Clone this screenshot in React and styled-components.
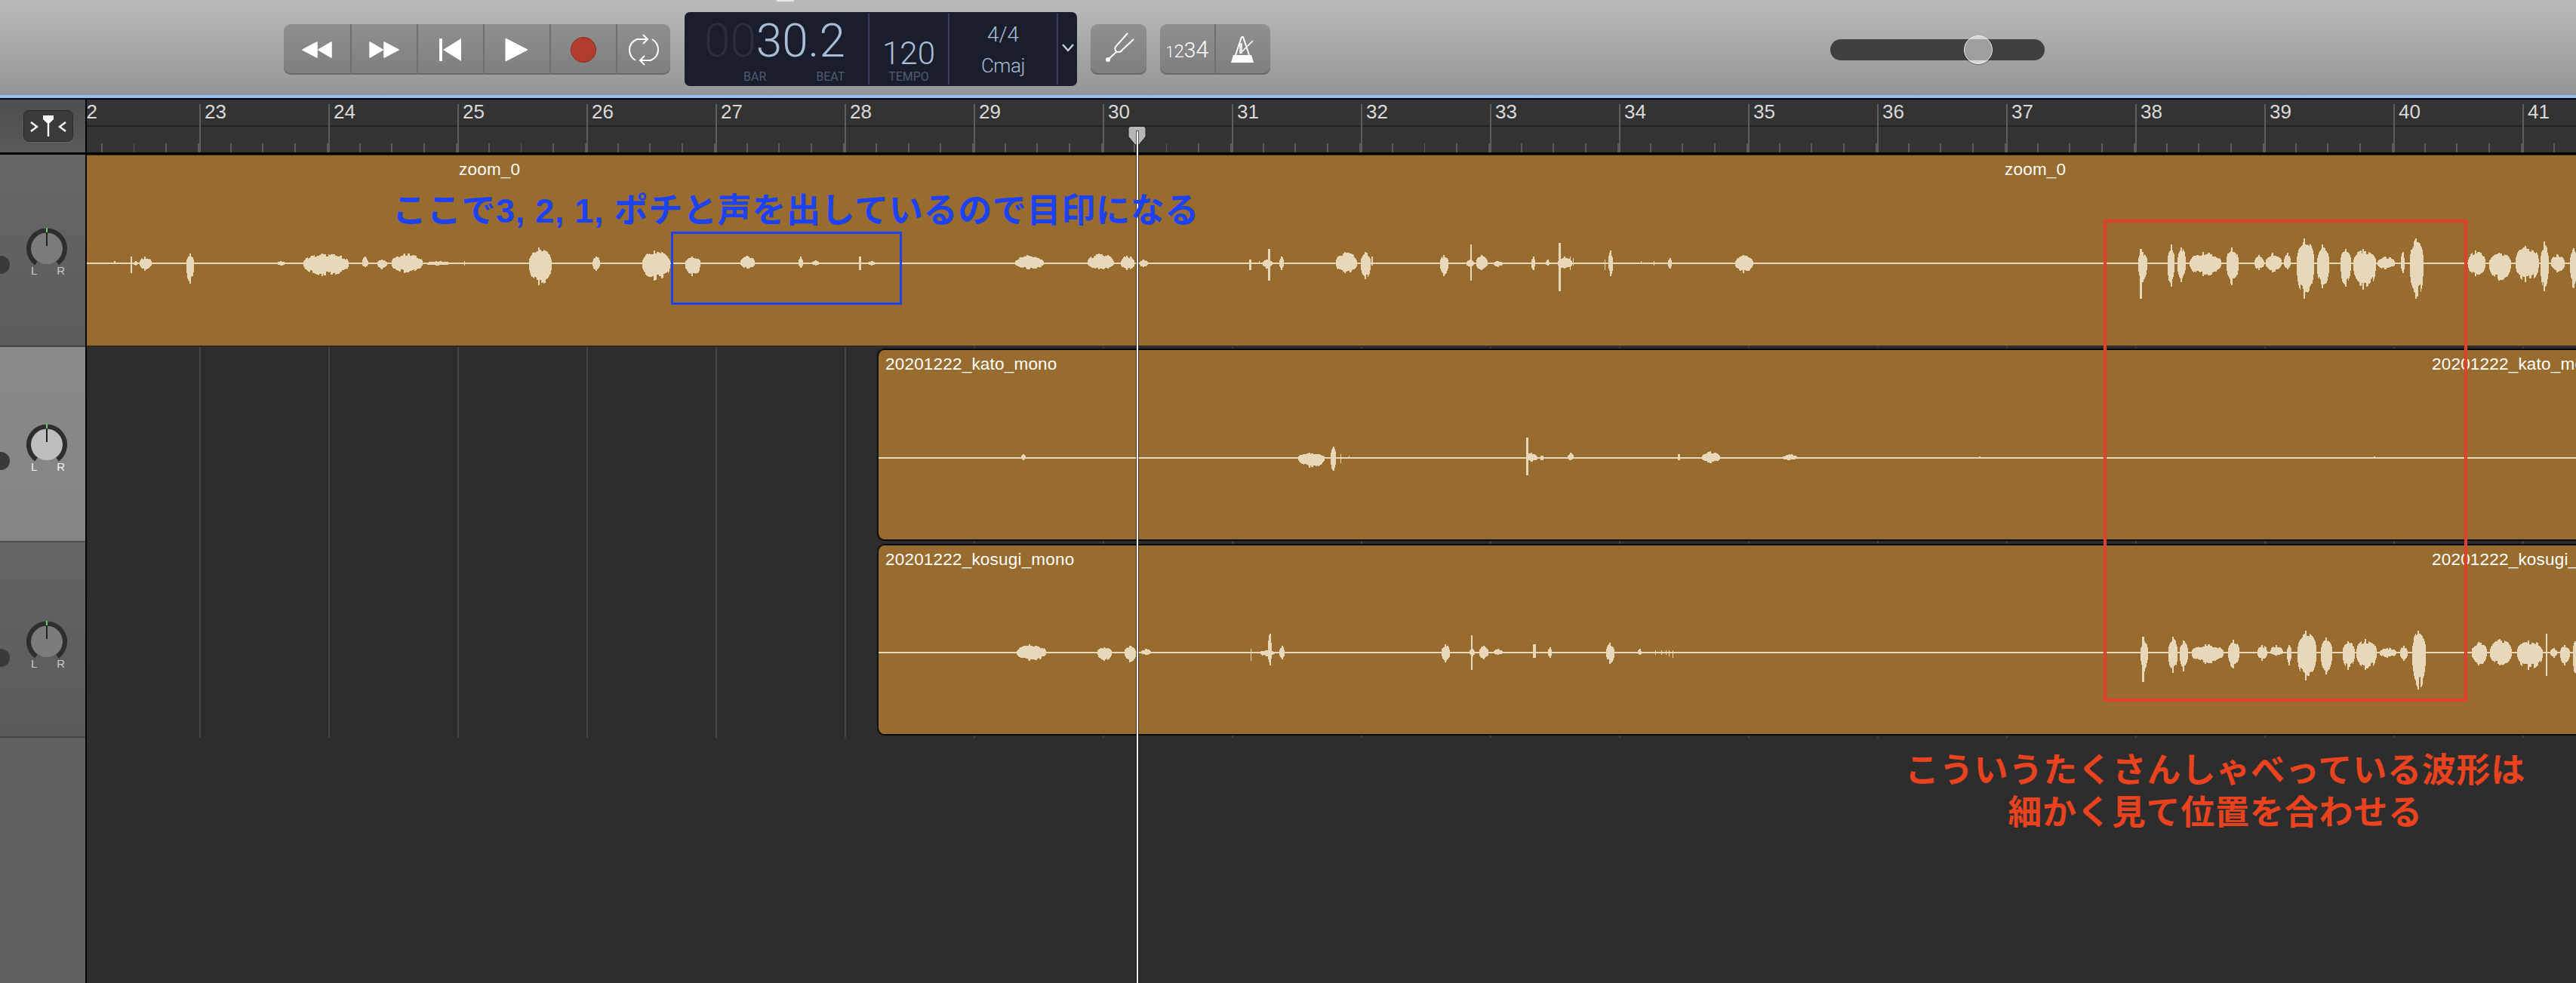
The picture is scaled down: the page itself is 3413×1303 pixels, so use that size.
import React from "react";
import styled, { createGlobalStyle } from "styled-components";

const BAR_WIDTH = 171;
const UI_FONT = '"Liberation Sans", Arial, sans-serif';
const NUM_FONT = 'Roboto, "Liberation Sans", sans-serif';
const JP_FONT = '"Liberation Sans", "Noto Sans CJK JP", sans-serif';

const GlobalStyle = createGlobalStyle`
    html, body { margin: 0; padding: 0; background: #2d2d2d; }
    body { font-family: ${UI_FONT}; overflow: hidden; }
`;

// [from x, to x, up, down] in page pixels
const wave1 = [
    [151, 153, 3, 1], [173, 175, 9, 13], [177, 183, 3, 3], [185, 201, 9, 10], [247, 257, 13, 27],
    [367, 378, 3, 3], [402, 462, 13, 17], [480, 488, 9, 5], [500, 513, 5, 8], [519, 560, 13, 13],
    [564, 596, 3, 3], [615, 616, 3, 3], [701, 731, 21, 29], [785, 795, 9, 10], [851, 888, 17, 23],
    [908, 928, 9, 17], [981, 1000, 10, 7], [1058, 1064, 9, 6], [1076, 1085, 4, 3], [1138, 1141, 9, 9],
    [1150, 1160, 3, 3], [1345, 1383, 11, 8], [1441, 1476, 13, 8], [1485, 1503, 10, 9], [1510, 1521, 5, 5],
    [1655, 1658, 5, 9], [1668, 1669, 3, 0], [1673, 1686, 5, 7], [1680, 1683, 19, 23], [1695, 1701, 9, 9],
    [1770, 1798, 15, 13], [1803, 1816, 15, 21], [1817, 1819, 9, 3], [1908, 1919, 11, 17], [1948, 1950, 25, 23],
    [1943, 1953, 5, 5], [1956, 1971, 11, 9], [1979, 1991, 3, 5], [2029, 2034, 9, 9], [2048, 2053, 5, 3],
    [2065, 2068, 27, 37], [2064, 2083, 9, 7], [2080, 2081, 9, 9], [2084, 2085, 7, 3], [2126, 2127, 5, 9],
    [2131, 2137, 17, 17], [2174, 2175, 3, 0], [2191, 2192, 3, 3], [2210, 2215, 7, 7], [2299, 2323, 11, 13],
    [2835, 2838, 19, 47], [2833, 2845, 15, 25], [2872, 2881, 25, 31], [2885, 2896, 21, 25], [2901, 2943, 15, 17],
    [2950, 2966, 21, 29], [2987, 3000, 11, 9], [3002, 3023, 14, 12], [3026, 3035, 14, 8], [3043, 3066, 33, 47],
    [3070, 3086, 25, 33], [3101, 3115, 19, 31], [3118, 3148, 19, 35], [3150, 3173, 9, 8], [3181, 3186, 15, 13],
    [3193, 3211, 33, 47], [3270, 3293, 17, 17], [3298, 3327, 14, 23], [3333, 3364, 23, 25], [3366, 3377, 29, 37],
    [3380, 3398, 12, 12], [3405, 3414, 20, 33],
];

const wave2 = [
    [1353, 1359, 5, 3], [1720, 1755, 7, 13], [1763, 1770, 15, 17], [1776, 1777, 5, 7], [1787, 1788, 3, 0],
    [2022, 2025, 27, 23], [2022, 2037, 7, 5], [2041, 2045, 3, 3], [2077, 2085, 7, 3], [2223, 2226, 5, 3],
    [2255, 2279, 9, 7], [2362, 2381, 5, 3], [2622, 2624, 2, 1], [3145, 3147, 2, 1],
];

const wave3 = [
    [1347, 1386, 11, 11], [1454, 1473, 7, 11], [1490, 1505, 9, 13], [1512, 1525, 5, 3], [1657, 1658, 5, 11],
    [1669, 1689, 3, 5], [1680, 1685, 25, 17], [1695, 1702, 9, 9], [1910, 1921, 11, 13], [1949, 1951, 23, 23],
    [1947, 1954, 5, 5], [1960, 1972, 9, 9], [1979, 1991, 5, 3], [2031, 2035, 11, 7], [2051, 2056, 7, 7],
    [2128, 2139, 13, 15], [2170, 2175, 5, 3], [2193, 2194, 3, 3], [2201, 2202, 3, 3], [2207, 2208, 3, 3],
    [2211, 2212, 3, 5], [2216, 2217, 3, 7],
    [2838, 2841, 21, 39], [2836, 2846, 15, 25], [2873, 2885, 21, 27], [2888, 2899, 16, 25], [2904, 2946, 11, 15],
    [2952, 2967, 17, 21], [2991, 3004, 10, 11], [3008, 3025, 10, 4], [3030, 3036, 10, 17], [3044, 3069, 29, 37],
    [3075, 3090, 20, 29], [3104, 3120, 15, 23], [3122, 3149, 18, 23], [3153, 3175, 6, 7], [3180, 3190, 9, 11],
    [3196, 3214, 29, 49], [3275, 3295, 14, 17], [3299, 3328, 18, 17], [3335, 3369, 16, 23], [3373, 3375, 25, 31],
    [3379, 3388, 6, 7], [3392, 3405, 10, 17], [3409, 3414, 15, 27],
];

const noise = (n) => {
    const v = Math.sin(n * 12.9898) * 43758.5453;
    return v - Math.floor(v);
};

const wavePath = (blips) => {
    let d = "";
    blips.forEach(([from, to, up, down]) => {
        const width = to - from;
        if (width <= 4) {
            d += `M${from} ${-up}h${width}V${down}h${-width}z`;
            return;
        }
        // the tallest column sits a bit left of the middle, the rest falls off jaggedly
        const peak = from + Math.round(width * 0.4);
        for (let x = from; x < to; x++) {
            const t = (x - from + 0.5) / width;
            const env = Math.pow(Math.sin(Math.PI * t), 0.35);
            const isPeak = x === peak || x === peak + 1;
            const step = Math.floor(x / 3);
            const u = isPeak ? up : Math.round(up * env * (0.66 + 0.32 * noise(step)));
            const b = isPeak ? down : Math.round(down * env * (0.66 + 0.32 * noise(step + 7)));
            d += `M${x} ${-u}h1V${b}h-1z`;
        }
    });
    return d;
};

const Page = styled.div`
    position: relative;
    width: 3413px;
    height: 1303px;
    display: flex;
    flex-direction: column;
    overflow: hidden;
    background: #2d2d2d;
`;

/* ---------- toolbar ---------- */
const Toolbar = styled.header`
    flex: 0 0 126px;
    display: flex;
    align-items: flex-start;
    padding-left: 376px;
    background: linear-gradient(#bababa, #959595);
`;
const TopNub = styled.i`
    position: absolute;
    top: 0;
    left: 1029px;
    width: 23px;
    height: 2px;
    background: #e6e6e6;
`;
const ButtonGroup = styled.div`
    display: flex;
    height: 67px;
    margin-top: 32px;
    margin-left: ${(p) => p.$gap || 0}px;
    border-radius: 9px;
    overflow: hidden;
    background: linear-gradient(#909090, #7e7e7e);
    box-shadow: inset 0 -2px 0 #696969;
`;
const ToolButton = styled.div`
    width: ${(p) => p.$width}px;
    box-sizing: border-box;
    display: flex;
    align-items: center;
    justify-content: center;
    color: #fff;
    & + & { border-left: 2px solid #6f6f6f; }
`;
const Display = styled.div`
    width: 520px;
    height: 98px;
    margin: 16px 0 0 19px;
    padding: 2px 0;
    box-sizing: border-box;
    display: flex;
    border-radius: 7px;
    background: #1a1d2b;
    color: #a9bdd6;
    font-family: ${NUM_FONT};
`;
const TimeCell = styled.div`
    width: 243px;
    padding-left: 26px;
    box-sizing: border-box;
    display: flex;
    flex-direction: column;
`;
const TimeDigits = styled.div`
    height: 76px;
    font-size: 62px;
    font-weight: 300;
    line-height: 72px;
    white-space: nowrap;
    span { color: #2a2e3d; }
`;
const TimeLabels = styled.div`
    display: flex;
    gap: 66px;
    padding-left: 52px;
`;
const DisplayLabel = styled.span`
    color: #4f5c72;
    font-size: 16px;
    line-height: 16px;
`;
const TempoCell = styled.div`
    width: 106px;
    border-left: 2px solid #39425a;
    box-sizing: border-box;
    display: flex;
    flex-direction: column;
    align-items: center;
`;
const TempoValue = styled.div`
    height: 76px;
    padding-top: 30px;
    box-sizing: border-box;
    font-size: 42px;
    font-weight: 300;
    line-height: 46px;
`;
const SignatureCell = styled.div`
    width: 144px;
    border-left: 2px solid #39425a;
    box-sizing: border-box;
    display: flex;
    flex-direction: column;
    align-items: center;
    padding-top: 10px;
    gap: 5px;
    font-size: 28px;
    line-height: 36px;
    font-weight: 300;
`;
const KeyName = styled.span`
    font-size: 26px;
    letter-spacing: -0.4px;
`;
const ChevronCell = styled.div`
    flex: 1;
    border-left: 2px solid #39425a;
    display: flex;
    align-items: center;
    justify-content: center;
    padding-bottom: 4px;
`;
const CountIn = styled.div`
    font-family: ${NUM_FONT};
    font-weight: 300;
    display: flex;
    align-items: baseline;
`;
const CountDigit = styled.span`
    font-size: ${(p) => p.$size}px;
`;
const Slider = styled.div`
    width: 284px;
    height: 28px;
    margin: 52px 0 0 742px;
    display: flex;
    align-items: center;
    padding-left: 177px;
    box-sizing: border-box;
    border-radius: 14px;
    background: #3f413e;
`;
const SliderKnob = styled.div`
    width: 38px;
    height: 38px;
    flex: none;
    box-sizing: border-box;
    border-radius: 50%;
    border: 1px solid #f0f0f0;
    background: linear-gradient(#d8d8d8 0 10%, #9d9f9c 10% 90%, #d8d8d8 90%);
    box-shadow: 0 1px 1px rgba(0, 0, 0, 0.4);
`;
const AccentLine = styled.div`
    flex: 0 0 4px;
    background: #8fbcf5;
`;
const AccentEdge = styled.div`
    flex: 0 0 2px;
    background: #000;
`;

/* ---------- ruler ---------- */
const RulerRow = styled.div`
    flex: 0 0 73px;
    box-sizing: border-box;
    display: flex;
    border-bottom: 3px solid #000;
`;
const RulerCorner = styled.div`
    flex: 0 0 113px;
    padding-left: 31px;
    box-sizing: border-box;
    display: flex;
    align-items: center;
    background: linear-gradient(#4e4e4e, #5a5a5a);
`;
const HeadDivider = styled.div`
    flex: 0 0 2px;
    background: #000;
`;
const ZoomButton = styled.div`
    width: 66px;
    height: 42px;
    display: flex;
    align-items: center;
    justify-content: center;
    box-sizing: border-box;
    border-radius: 7px;
    border: 1px solid #2a2a2a;
    background: #3b3b3b;
    box-shadow: 0 1px 0 #6a6a6a;
`;
const RulerBars = styled.div`
    flex: 1;
    display: flex;
    overflow: hidden;
    background: linear-gradient(#333 0 34px, #222 34px 36px, #333 36px);
`;
const Bar = styled.div`
    flex: 0 0 ${BAR_WIDTH}px;
    margin-left: ${(p) => p.$offset || 0}px;
    height: 70px;
    box-sizing: border-box;
    padding-left: 7px;
    background:
        linear-gradient(#5e5e5e, #5e5e5e) 0 6px / 2px 64px no-repeat,
        repeating-linear-gradient(to right, transparent 0 40.75px, #5a5a5a 40.75px 42.75px) 0 100% / 100% 12px no-repeat;
`;
const BarNumber = styled.span`
    display: block;
    color: #d9d9d9;
    font-family: ${UI_FONT};
    font-size: 26px;
    line-height: 30px;
    padding-top: 1px;
`;

/* ---------- tracks ---------- */
const Tracks = styled.main`
    flex: 1;
    display: flex;
    flex-direction: column;
`;
const TrackRow = styled.section`
    flex: ${(p) => (p.$height ? `0 0 ${p.$height}px` : 1)};
    display: flex;
    min-height: 0;
`;
const TrackHeader = styled.div`
    flex: 0 0 113px;
    box-sizing: border-box;
    display: flex;
    align-items: center;
    padding-top: ${(p) => p.$top || 0}px;
    background: ${(p) => p.$bg};
    border-bottom: 2px solid ${(p) => p.$line};
`;
const MuteDot = styled.i`
    flex: none;
    width: 24px;
    height: 24px;
    margin: 35px 0 0 -11px;
    border-radius: 50%;
    background: #3a3a38;
`;
const KnobBox = styled.div`
    width: 54px;
    margin-left: 22px;
    display: flex;
    flex-direction: column;
`;
const KnobEnds = styled.div`
    display: flex;
    justify-content: space-between;
    margin-top: -5px;
    padding: 0 3px 0 6px;
    color: ${(p) => p.$color};
    font-size: 15px;
    line-height: 15px;
`;
const Lane = styled.div`
    flex: 1;
    min-width: 0;
    padding: ${(p) => p.$pad};
    box-sizing: border-box;
    display: flex;
    background-color: #2d2d2d;
    background-image: ${(p) => (p.$grid ? "linear-gradient(to right, #444 2px, transparent 2px)" : "none")};
    background-size: ${BAR_WIDTH}px 100%;
    background-position: 149px 0;
`;
const Region = styled.div`
    position: relative;
    flex: 1;
    margin-left: ${(p) => p.$left}px;
    overflow: hidden;
    background: #986b2f;
    box-sizing: border-box;
    ${(p) => p.$clip && `
        border-radius: 9px 0 0 9px;
        border-left: 2px solid #111;
        box-shadow: inset 0 2px 0 #050505, inset 0 -2px 0 #050505;
    `}
`;
const RegionName = styled.span`
    position: absolute;
    top: ${(p) => p.$top}px;
    left: ${(p) => p.$left}px;
    color: #fff;
    font-size: 22.5px;
    letter-spacing: 0.2px;
    line-height: 26px;
    white-space: nowrap;
`;
const WaveSvg = styled.svg`
    display: block;
    shape-rendering: crispEdges;
`;

/* ---------- overlays ---------- */
const PlayheadLine = styled.div`
    position: absolute;
    top: 174px;
    bottom: 0;
    left: 1506px;
    width: 2px;
    background: #f4f4f4;
    box-shadow: 0 0 0 1px rgba(20, 15, 10, 0.6);
`;
const PlayheadCap = styled.svg`
    position: absolute;
    top: 167px;
    left: 1494px;
`;
const Note = styled.div`
    position: absolute;
    top: ${(p) => p.$top}px;
    left: ${(p) => p.$left}px;
    color: ${(p) => p.$color};
    font-family: ${JP_FONT};
    font-size: ${(p) => p.$size}px;
    font-weight: 700;
    line-height: 56px;
    text-align: center;
    white-space: nowrap;
    letter-spacing: ${(p) => p.$spacing || 0}px;
`;
const MarkBox = styled.div`
    position: absolute;
    top: ${(p) => p.$top}px;
    left: ${(p) => p.$left}px;
    width: ${(p) => p.$w}px;
    height: ${(p) => p.$h}px;
    box-sizing: border-box;
    border: ${(p) => p.$border}px solid ${(p) => p.$color};
`;

const Rewind = ({ flip }) => (
    <svg width="42" height="24" viewBox="0 0 42 24" style={flip ? { transform: "scaleX(-1)" } : undefined}>
        <path fill="#fff" stroke="#fff" strokeWidth="1.5" strokeLinejoin="round" d="M21 2v20L2 12zM40 2v20L23 12z" />
    </svg>
);

const SkipBack = () => (
    <svg width="32" height="32" viewBox="0 0 32 32">
        <path fill="#fff" d="M1 1h4v30H1zM30 1v30L6 16z" />
    </svg>
);

const Play = () => (
    <svg width="32" height="32" viewBox="0 0 32 32">
        <path fill="#fff" stroke="#fff" strokeLinejoin="round" d="M1 1l29 15L1 31z" />
    </svg>
);

const RecordDot = () => (
    <svg width="36" height="36" viewBox="0 0 36 36">
        <circle cx="18" cy="18" r="16.5" fill="#b23c2e" stroke="#8e2c21" />
    </svg>
);

const Cycle = () => (
    <svg width="44" height="44" viewBox="0 0 44 44" fill="none" stroke="#fff" strokeWidth="2">
        <path d="M13 8C6 11 3 16 3 22c0 6 3 11 8 14" />
        <path d="M12 8h14M21 2l6 6-6 6" />
        <path d="M31 36c7-3 10-8 10-14 0-6-3-11-8-14" />
        <path d="M32 36H18M23 30l-6 6 6 6" />
    </svg>
);

const TuningFork = () => (
    <svg width="74" height="67" viewBox="0 0 74 67" fill="none" stroke="#fff" strokeWidth="2">
        <path d="M23 47l11-10" />
        <path d="M49 12L33 30c-2 3 0 7 4 7 2 0 4-1 5-3l15-14" />
        <circle cx="23" cy="47" r="3" fill="#fff" stroke="none" />
    </svg>
);

const Metronome = () => (
    <svg width="34" height="36" viewBox="0 0 34 36" fill="none" stroke="#fff" strokeWidth="2">
        <path d="M15 1h2l8 24M15 1L7 25" />
        <path fill="#fff" stroke="none" d="M4 25h24l3 10H1z" />
        <path d="M13 10v13M13 23L30 6M12 11l3-1v13" strokeWidth="1.6" />
    </svg>
);

const FocusIcon = () => (
    <svg width="50" height="28" viewBox="0 0 50 28" fill="none" stroke="#fff" strokeWidth="2.4">
        <path fill="#fff" stroke="none" d="M18 0h14v5l-5 5h-4l-5-5z" />
        <path d="M25 4v24" />
        <path d="M2 9l8 6-8 6M48 9l-8 6 8 6" />
    </svg>
);

const PanKnob = ({ disc, labelColor }) => (
    <KnobBox>
        <svg width="54" height="54" viewBox="0 0 54 54">
            <circle cx="27" cy="27" r="21" fill={disc} />
            <path d="M13 47A24 24 0 1 1 41 47" fill="none" stroke="#2e2e2e" strokeWidth="6" />
            <path d="M27 0v6" stroke="#6ccf6a" strokeWidth="2" />
            <path d="M27 6v18" stroke="#222" strokeWidth="2" />
        </svg>
        <KnobEnds $color={labelColor}>
            <span>L</span>
            <span>R</span>
        </KnobEnds>
    </KnobBox>
);

const Wave = ({ left, blips, center, height }) => (
    <WaveSvg width={3413 - left} height={height} viewBox={`${left} ${-center} ${3413 - left} ${height}`}>
        <rect x={left} y="-1" width={3413 - left} height="2" fill="#e9d7b9" />
        <path d={wavePath(blips)} fill="#e9d7b9" />
    </WaveSvg>
);

const bars = Array.from({ length: 20 }, (_, i) => 22 + i);

export default function App() {
    return (
        <Page>
            <GlobalStyle />
            <Toolbar>
                <ButtonGroup>
                    <ToolButton $width={88}><Rewind /></ToolButton>
                    <ToolButton $width={88}><Rewind flip /></ToolButton>
                    <ToolButton $width={88}><SkipBack /></ToolButton>
                    <ToolButton $width={88}><Play /></ToolButton>
                    <ToolButton $width={88}><RecordDot /></ToolButton>
                    <ToolButton $width={72}><Cycle /></ToolButton>
                </ButtonGroup>
                <Display>
                    <TimeCell>
                        <TimeDigits><span>00</span>30.2</TimeDigits>
                        <TimeLabels>
                            <DisplayLabel>BAR</DisplayLabel>
                            <DisplayLabel>BEAT</DisplayLabel>
                        </TimeLabels>
                    </TimeCell>
                    <TempoCell>
                        <TempoValue>120</TempoValue>
                        <DisplayLabel>TEMPO</DisplayLabel>
                    </TempoCell>
                    <SignatureCell>
                        <span>4/4</span>
                        <KeyName>Cmaj</KeyName>
                    </SignatureCell>
                    <ChevronCell>
                        <svg width="16" height="12" viewBox="0 0 16 12" fill="none" stroke="#c5d2e2" strokeWidth="2.4">
                            <path d="M1 2l7 8 7-8" />
                        </svg>
                    </ChevronCell>
                </Display>
                <ButtonGroup $gap={18}>
                    <ToolButton $width={74}><TuningFork /></ToolButton>
                </ButtonGroup>
                <ButtonGroup $gap={18}>
                    <ToolButton $width={72}>
                        <CountIn>
                            <CountDigit $size={20}>1</CountDigit>
                            <CountDigit $size={24}>2</CountDigit>
                            <CountDigit $size={28}>3</CountDigit>
                            <CountDigit $size={31}>4</CountDigit>
                        </CountIn>
                    </ToolButton>
                    <ToolButton $width={74}><Metronome /></ToolButton>
                </ButtonGroup>
                <Slider><SliderKnob /></Slider>
            </Toolbar>
            <TopNub />
            <AccentLine />
            <AccentEdge />
            <RulerRow>
                <RulerCorner>
                    <ZoomButton><FocusIcon /></ZoomButton>
                </RulerCorner>
                <HeadDivider />
                <RulerBars>
                    {bars.map((n, i) => (
                        <Bar key={n} $offset={i === 0 ? -22 : 0}>
                            <BarNumber>{n}</BarNumber>
                        </Bar>
                    ))}
                </RulerBars>
            </RulerRow>
            <Tracks>
                <TrackRow $height={255}>
                    <TrackHeader $bg="linear-gradient(#676767, #5c5c5c)" $line="#454545" $top={4}>
                        <MuteDot />
                        <PanKnob disc="#7c7c7c" labelColor="#c9c9c9" />
                    </TrackHeader>
                    <HeadDivider />
                    <Lane $pad="1px 0 2px">
                        <Region $left={0}>
                            <Wave left={115} blips={wave1} center={143} height={252} />
                            <RegionName $left={493} $top={6}>zoom_0</RegionName>
                            <RegionName $left={2541} $top={6}>zoom_0</RegionName>
                        </Region>
                    </Lane>
                </TrackRow>
                <TrackRow $height={259}>
                    <TrackHeader $bg="linear-gradient(#8a8a8a, #848484)" $line="#4e4e4e" $top={10}>
                        <MuteDot />
                        <PanKnob disc="#bebebe" labelColor="#f2f2f2" />
                    </TrackHeader>
                    <HeadDivider />
                    <Lane $pad="2px 0 2px" $grid>
                        <Region $left={1047} $clip>
                            <Wave left={1164} blips={wave2} center={145} height={255} />
                            <RegionName $left={9} $top={8}>20201222_kato_mono</RegionName>
                            <RegionName $left={2058} $top={8}>20201222_kato_mono</RegionName>
                        </Region>
                    </Lane>
                </TrackRow>
                <TrackRow $height={259}>
                    <TrackHeader $bg="linear-gradient(#646464, #5b5b5b)" $line="#454545" $top={14}>
                        <MuteDot />
                        <PanKnob disc="#7c7c7c" labelColor="#c9c9c9" />
                    </TrackHeader>
                    <HeadDivider />
                    <Lane $pad="2px 0 3px" $grid>
                        <Region $left={1047} $clip>
                            <Wave left={1164} blips={wave3} center={144} height={254} />
                            <RegionName $left={9} $top={8}>20201222_kosugi_mono</RegionName>
                            <RegionName $left={2058} $top={8}>20201222_kosugi_mono</RegionName>
                        </Region>
                    </Lane>
                </TrackRow>
                <TrackRow>
                    <TrackHeader $bg="#616161" $line="#616161" />
                    <HeadDivider />
                    <Lane />
                </TrackRow>
            </Tracks>

            <PlayheadCap width="25" height="26" viewBox="0 0 25 26">
                <path fill="#b7b7b7" stroke="#222" strokeWidth="1" d="M4 .5h17a3 3 0 0 1 3 3V14l-9 11h-5L1 14V3.500a3 3 0 0 1 3-3z" />
            </PlayheadCap>
            <PlayheadLine />

            <MarkBox $left={889} $top={307} $w={306} $h={97} $border={3} $color="#1f41f0" />
            <MarkBox $left={2787} $top={291} $w={482} $h={639} $border={4} $color="#e2402a" />
            <Note $left={520} $top={252} $size={45} $spacing={0.7} $color="#1c42f2">ここで3, 2, 1, ポチと声を出しているので目印になる</Note>
            <Note $left={2524} $top={994} $size={45} $spacing={0.8} $color="#e8421f">
                こういうたくさんしゃべっている波形は
                <br />
                細かく見て位置を合わせる
            </Note>
        </Page>
    );
}
